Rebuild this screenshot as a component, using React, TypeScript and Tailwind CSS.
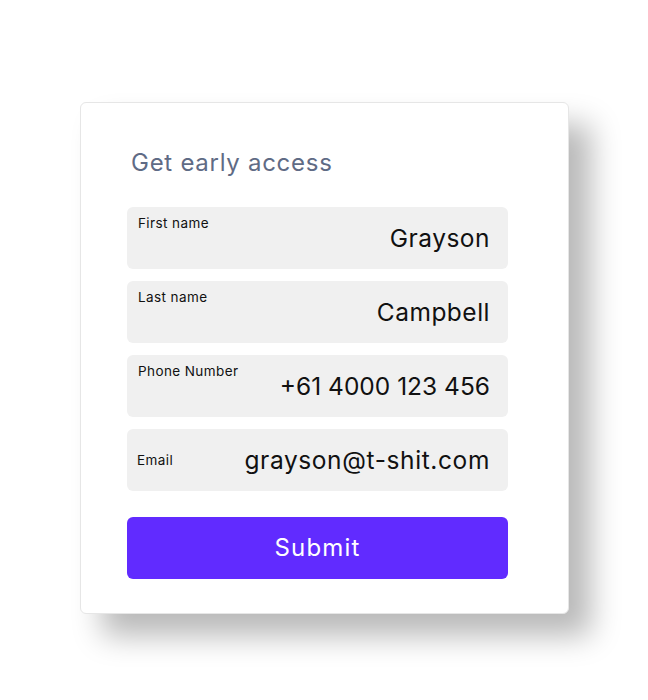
const fields = [
  { label: 'First name', value: 'Grayson', center: false, tight: false },
  { label: 'Last name', value: 'Campbell', center: false, tight: false },
  { label: 'Phone Number', value: '+61 4000 123 456', center: false, tight: true },
  { label: 'Email', value: 'grayson@t-shit.com', center: true, tight: false },
]

export default function App() {
  return (
    <div
      className="min-h-[700px] w-[648px] bg-white pl-[80px] pt-[102px]"
      style={{ fontFamily: 'Inter, "Noto Sans", sans-serif' }}
    >
      <div className="w-[489px] rounded-md border border-[#e6e6e6] bg-white pl-[46px] pr-[60px] pt-[43px] pb-[34px] shadow-[22px_22px_30px_rgba(0,0,0,0.28)]">
        <h2 className="mb-[27px] pl-1 text-[24px] leading-[34px] font-normal tracking-[0.03em] text-[#5f6b85]">
          Get early access
        </h2>
        <div className="flex flex-col gap-3">
          {fields.map((f) => (
            <div
              key={f.label}
              className={
                f.center
                  ? 'flex h-[62px] items-center justify-between rounded-md bg-[#f0f0f0] pr-[18px] pl-[10px]'
                  : 'flex h-[62px] justify-between rounded-md bg-[#f0f0f0] pt-[8px] pr-[18px] pl-[11px]'
              }
            >
              <span className="text-[13.5px] leading-[16px] tracking-[0.03em] text-[#111]">{f.label}</span>
              <span
                className={
                  f.center
                    ? 'text-[24.5px] leading-[30px] tracking-[0.025em] text-[#111]'
                    : f.tight
                      ? 'mt-[8px] text-[24.5px] leading-[30px] tracking-normal text-[#111]'
                      : 'mt-[8px] text-[24.5px] leading-[30px] tracking-[0.02em] text-[#111]'
                }
              >
                {f.value}
              </span>
            </div>
          ))}
        </div>
        <button className="mt-[26px] h-[62px] w-full rounded-md bg-[#612bff] text-[24px] tracking-[0.05em] text-white">
          Submit
        </button>
      </div>
    </div>
  )
}
